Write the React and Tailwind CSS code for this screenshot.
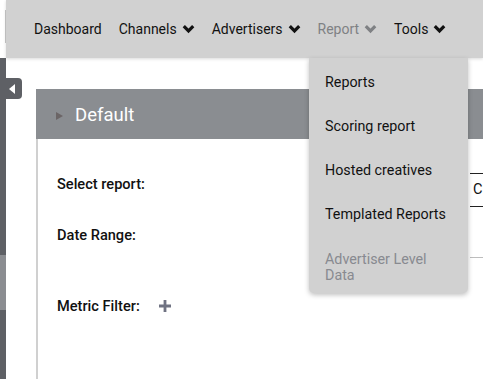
import React from "react";

function Chevron() {
  return (
    <svg width="13" height="10" viewBox="0 0 13 10" className="shrink-0">
      <path d="M1.8 2.2 L6.5 6.9 L11.2 2.2" fill="none" stroke="currentColor" strokeWidth="3.2" strokeLinecap="butt" strokeLinejoin="miter" />
    </svg>
  );
}

function NavItem({ label, chevron, muted }) {
  return (
    <div className={`flex items-center gap-[5px] ${muted ? "text-[#7f8184]" : "text-[#111]"}`}>
      <span>{label}</span>
      {chevron && <Chevron />}
    </div>
  );
}

export default function App() {
  return (
    <div
      className="relative w-[483px] h-[379px] overflow-hidden bg-white flex flex-col"
      style={{ fontFamily: "Roboto, 'Liberation Sans', sans-serif" }}
    >
      {/* Top bar */}
      <div className="flex h-[58px] shrink-0">
        <div className="w-[6px] flex items-start pt-[10px]">
          <div className="ml-[5px] w-[1px] h-[33px] bg-[#c8c8c8]" />
        </div>
        <div className="flex-1 bg-[#d1d1d1] flex items-center pl-[28px] gap-[17px] text-[14px] shadow-[0_1px_3px_rgba(0,0,0,0.15)]">
          <NavItem label="Dashboard" />
          <NavItem label="Channels" chevron />
          <NavItem label="Advertisers" chevron />
          <NavItem label="Report" chevron muted />
          <NavItem label="Tools" chevron />
        </div>
      </div>

      {/* Body */}
      <div className="flex flex-1 min-h-0">
        <div className="w-[6px] flex flex-col">
          <div className="h-[197px] bg-[#5e6065]" />
          <div className="h-[55px] bg-[#8b8d91]" />
          <div className="flex-1 bg-[#5e6065]" />
        </div>
        <div className="relative flex-1 pl-[30px] pt-[31px]">
          {/* toggle tab */}
          <div className="absolute left-0 top-[20px] w-[16px] h-[21px] bg-[#5e6065] rounded-r-[4px] flex items-center pl-[3px]">
            <div className="w-0 h-0 border-y-[5px] border-y-transparent border-r-[6px] border-r-white" />
          </div>

          {/* panel */}
          <div className="flex flex-col h-full">
            <div className="h-[50px] bg-[#8a8d91] flex items-center pl-[20px] pt-[3px] gap-[12px]">
              <div className="w-0 h-0 border-y-[4px] border-y-transparent border-l-[7px] border-l-[#6b6566]" />
              <span className="text-white text-[18.5px]">Default</span>
            </div>
            <div className="flex-1 border-l-[2px] border-[#d0d0d0] pl-[19px] pt-[34px] flex flex-col text-[14.6px] font-medium text-[#111]">
              <div className="flex items-start">
                <div className="w-[413px] leading-[20px] pt-[1px]">Select report:</div>
                <div className="flex-1 h-[34px] border-t border-b border-[#222] pl-[3px] flex items-center font-normal">C</div>
              </div>
              <div className="flex items-start mt-[18px]">
                <div className="w-[413px] leading-[20px]">Date Range:</div>
              </div>
              <div className="flex items-start mt-[12px]">
                <div className="w-[413px]" />
                <div className="flex-1 h-[20px] border-t border-[#bdbdbd]" />
              </div>
              <div className="flex items-center mt-[19px] gap-[19px]">
                <div className="leading-[20px]">Metric Filter:</div>
                <svg width="12" height="12" viewBox="0 0 12 12" className="text-[#6f7282]">
                  <path d="M4.6 0 H7.4 V4.6 H12 V7.4 H7.4 V12 H4.6 V7.4 H0 V4.6 H4.6 Z" fill="currentColor" />
                </svg>
              </div>
            </div>
          </div>
        </div>
      </div>

      {/* Dropdown */}
      <div className="absolute left-[309px] top-[58px] w-[159px] h-[235px] bg-[#d1d1d1] rounded-b-[5px] shadow-[0_2px_5px_rgba(0,0,0,0.25)] flex flex-col pl-[16px] pt-[14px] text-[14.3px] text-[#111]">
        <div className="h-[22px] flex items-center">Reports</div>
        <div className="h-[22px] flex items-center mt-[22px]">Scoring report</div>
        <div className="h-[22px] flex items-center mt-[22px]">Hosted creatives</div>
        <div className="h-[22px] flex items-center mt-[22px]">Templated Reports</div>
        <div className="mt-[25px] leading-[16px] text-[#888a90]">Advertiser Level<br />Data</div>
      </div>
    </div>
  );
}
